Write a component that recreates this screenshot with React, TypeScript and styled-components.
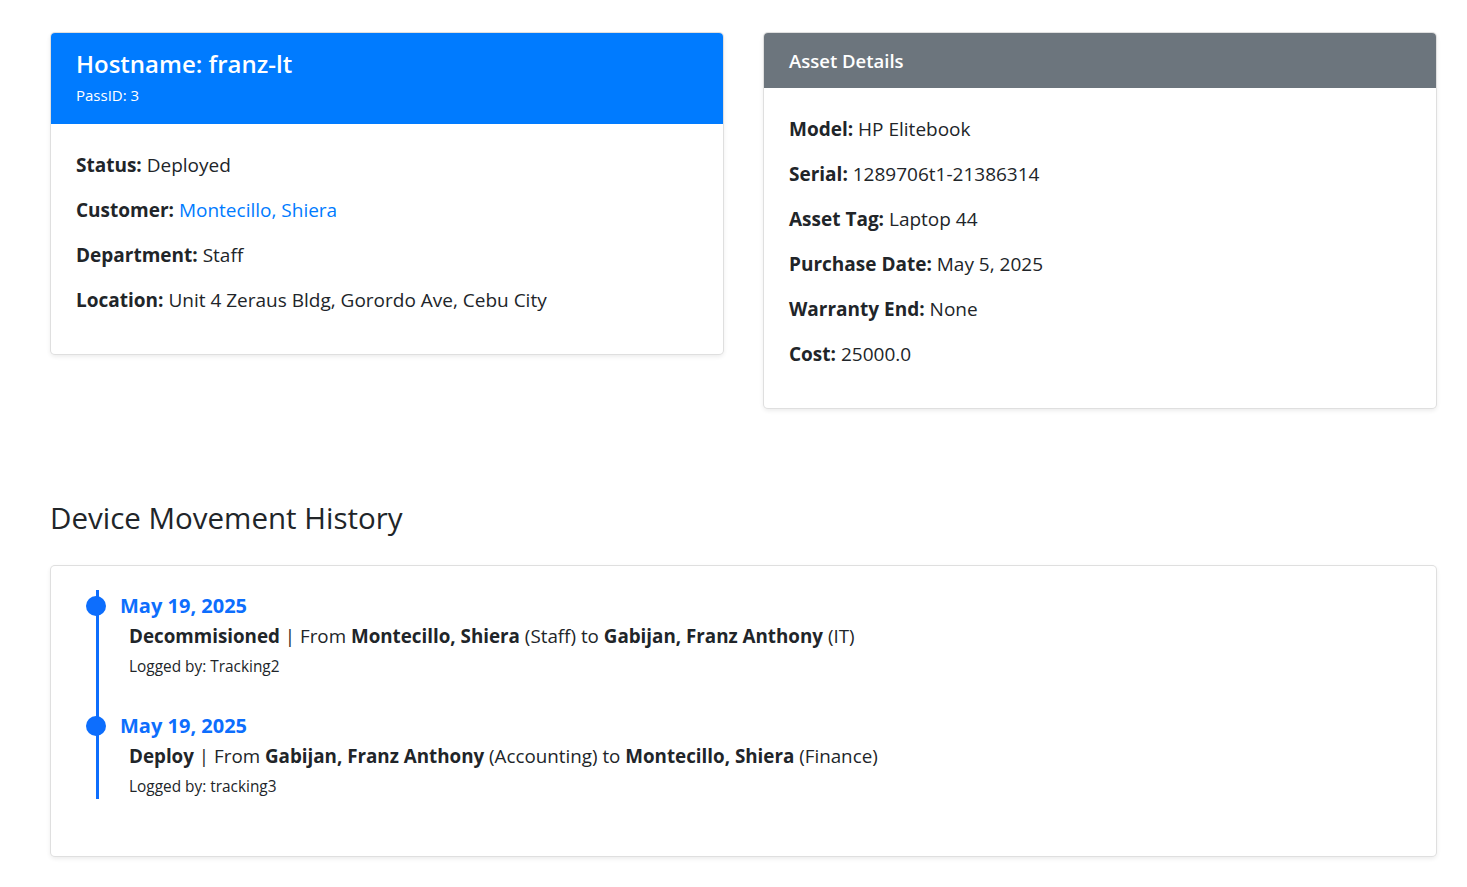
import React from "react";
import styled, { createGlobalStyle } from "styled-components";

const FONT = `"Open Sans", "Noto Sans", "Liberation Sans", sans-serif`;

const Global = createGlobalStyle`
  html, body { margin: 0; padding: 0; background: #ffffff; }
  body { font-family: ${FONT}; color: #212529; font-size: 19px; }
  * { box-sizing: border-box; }
`;

const Page = styled.div`
  width: 1387px;
  margin: 0 0 0 50px;
  padding: 32px 0 30px;
`;

const CardRow = styled.div`
  display: grid;
  grid-template-columns: 1fr 1fr;
  column-gap: 39px;
  align-items: start;
`;

const Card = styled.section`
  background: #fff;
  border: 1px solid rgba(0, 0, 0, 0.125);
  border-radius: 5px;
  box-shadow: 0 2px 4px rgba(0, 0, 0, 0.075);
  overflow: hidden;
`;

const CardHeader = styled.header<{ $tone: "primary" | "secondary" }>`
  background: ${(p) => (p.$tone === "primary" ? "#007bff" : "#6c757d")};
  color: #fff;
  padding: ${(p) => (p.$tone === "primary" ? "16px 25px 18px" : "16px 25px")};
`;

const HeaderTitle = styled.h2`
  margin: 0 0 6px;
  font-size: 24px;
  line-height: 30px;
  font-weight: 600;
`;

const HeaderSub = styled.div`
  font-size: 15px;
  line-height: 21px;
`;

const HeaderLabel = styled.h3`
  margin: 0;
  font-size: 18.5px;
  line-height: 23px;
  font-weight: 600;
`;

const CardBody = styled.div`
  padding: 27px 25px 23px;
`;

const Field = styled.p`
  margin: 0 0 16px;
  font-size: 19px;
  line-height: 29px;
  strong { font-weight: 700; }
`;

const Link = styled.a`
  color: #007bff;
  text-decoration: none;
`;

const SectionTitle = styled.h2`
  margin: 90px 0 28px;
  font-size: 29.5px;
  line-height: 38px;
  font-weight: 500;
`;

const TimelineBody = styled.div`
  padding: 24px 25px 57px;
`;

const Timeline = styled.ol`
  list-style: none;
  margin: 0 0 0 20px;
  padding: 4px 0 0 21px;
  border-left: 3px solid #0d6efd;
`;

const Item = styled.li`
  position: relative;
  margin-bottom: 35px;
  &:last-child { margin-bottom: 0; }
`;

const Dot = styled.span`
  position: absolute;
  left: -34px;
  top: 2px;
  width: 20px;
  height: 20px;
  border-radius: 50%;
  background: #0d6efd;
`;

const DateLine = styled.div`
  color: #0d6efd;
  font-size: 20px;
  line-height: 24px;
  font-weight: 700;
  margin-bottom: 4px;
`;

const Desc = styled.div`
  padding-left: 9px;
  font-size: 18.8px;
  line-height: 28px;
  strong { font-weight: 700; }
`;

const Logged = styled.div`
  padding-left: 9px;
  margin-top: 5px;
  font-size: 15.4px;
  line-height: 24px;
`;

const fields1: [string, React.ReactNode][] = [
  ["Status:", "Deployed"],
  ["Customer:", <Link href="#">Montecillo, Shiera</Link>],
  ["Department:", "Staff"],
  ["Location:", "Unit 4 Zeraus Bldg, Gorordo Ave, Cebu City"],
];

const fields2: [string, string][] = [
  ["Model:", "HP Elitebook"],
  ["Serial:", "1289706t1-21386314"],
  ["Asset Tag:", "Laptop 44"],
  ["Purchase Date:", "May 5, 2025"],
  ["Warranty End:", "None"],
  ["Cost:", "25000.0"],
];

const moves = [
  {
    date: "May 19, 2025",
    action: "Decommisioned",
    from: "Montecillo, Shiera",
    fromDept: "Staff",
    to: "Gabijan, Franz Anthony",
    toDept: "IT",
    by: "Tracking2",
  },
  {
    date: "May 19, 2025",
    action: "Deploy",
    from: "Gabijan, Franz Anthony",
    fromDept: "Accounting",
    to: "Montecillo, Shiera",
    toDept: "Finance",
    by: "tracking3",
  },
];

export default function App() {
  return (
    <>
      <Global />
      <Page>
        <CardRow>
          <Card>
            <CardHeader $tone="primary">
              <HeaderTitle>Hostname: franz-lt</HeaderTitle>
              <HeaderSub>PassID: 3</HeaderSub>
            </CardHeader>
            <CardBody>
              {fields1.map(([k, v]) => (
                <Field key={k}>
                  <strong>{k}</strong> {v}
                </Field>
              ))}
            </CardBody>
          </Card>
          <Card>
            <CardHeader $tone="secondary">
              <HeaderLabel>Asset Details</HeaderLabel>
            </CardHeader>
            <CardBody>
              {fields2.map(([k, v]) => (
                <Field key={k}>
                  <strong>{k}</strong> {v}
                </Field>
              ))}
            </CardBody>
          </Card>
        </CardRow>
        <SectionTitle>Device Movement History</SectionTitle>
        <Card>
          <TimelineBody>
            <Timeline>
              {moves.map((m, i) => (
                <Item key={i}>
                  <Dot />
                  <DateLine>{m.date}</DateLine>
                  <Desc>
                    <strong>{m.action}</strong> | From <strong>{m.from}</strong> ({m.fromDept}) to{" "}
                    <strong>{m.to}</strong> ({m.toDept})
                  </Desc>
                  <Logged>Logged by: {m.by}</Logged>
                </Item>
              ))}
            </Timeline>
          </TimelineBody>
        </Card>
      </Page>
    </>
  );
}
